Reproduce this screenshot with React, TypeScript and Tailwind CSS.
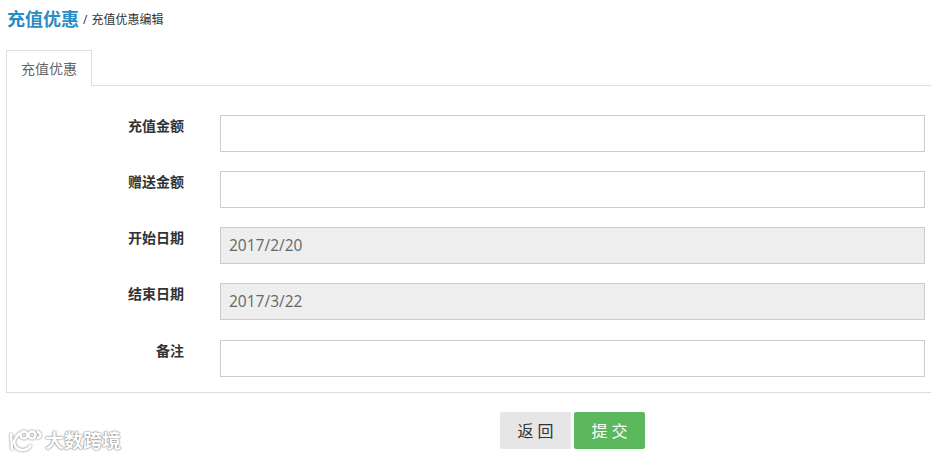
const CJK = '"Open Sans","Noto Sans CJK SC",sans-serif';

function Row({ label, value, className }: { label: string; value?: string; className: string }) {
  return (
    <div className={`flex ${className}`}>
      <label className="w-[177px] shrink-0 pt-[1px] text-right text-[14px] leading-[20px] font-bold text-[#333]">{label}</label>
      <div
        className={`ml-[36px] flex h-[37px] w-[705px] items-center border border-[#ccc] px-[8px] text-[15.5px] text-[#666] ${value ? "bg-[#eee]" : "bg-white"}`}
      >
        {value}
      </div>
    </div>
  );
}

export default function App() {
  return (
    <div className="h-[460px] w-[931px] overflow-hidden bg-white" style={{ fontFamily: CJK }}>
      <div className="flex h-[50px] items-start pl-[7px] pt-[7px]">
        <span className="text-[18px] leading-[24px] font-bold text-[#2a8cc4]">充值优惠</span>
        <span className="ml-[4px] pt-[4px] text-[12px] leading-[18px] text-[#333]">/ <span className="ml-[1px]">充值优惠编辑</span></span>
      </div>
      <div className="ml-[6px] h-[36px]">
        <div className="relative z-10 h-[36px] w-[86px] border border-b-0 border-[#ddd] bg-white text-center text-[14px] leading-[35px] text-[#666]">
          充值优惠
        </div>
      </div>
      <div className="ml-[6px] -mt-[1px] h-[308px] border border-r-0 border-[#ddd] pt-[29px]">
        <Row label="充值金额" className="" />
        <Row label="赠送金额" className="mt-[19px]" />
        <Row label="开始日期" value="2017/2/20" className="mt-[19px]" />
        <Row label="结束日期" value="2017/3/22" className="mt-[19px]" />
        <Row label="备注" className="mt-[20px]" />
      </div>
      <div className="relative flex">
        <div className="absolute left-[8px] top-[36px] flex items-center">
          <svg width="36" height="24" viewBox="0 0 36 24" fill="none" stroke="#fff" strokeWidth="2.5" style={{ filter: "drop-shadow(0 0 1px #777)" }}>
            <path d="M3 4 L4 21 M12 4 Q6 10 6 13 Q7 21 15 21 Q20 21 23 16" />
            <circle cx="16" cy="6" r="3.5" />
            <circle cx="24" cy="6" r="3.5" />
            <path d="M29 3 A3.5 3 0 1 1 29 9" />
          </svg>
          <span
            className="ml-[1px] text-[19px] leading-[24px] font-bold text-white"
            style={{ textShadow: "0 0 2px #777, 0 0 1px #777" }}
          >
            大数跨境
          </span>
        </div>
        <div className="ml-[500px] mt-[19px] flex gap-[3px]">
          <button className="h-[37px] w-[71px] rounded-[2px] bg-[#e6e6e6] pl-[4px] text-[16px] tracking-[4px] text-[#333]">返回</button>
          <button className="h-[37px] w-[71px] rounded-[2px] bg-[#5cb85c] pl-[4px] text-[16px] tracking-[4px] text-white">提交</button>
        </div>
      </div>
    </div>
  );
}
